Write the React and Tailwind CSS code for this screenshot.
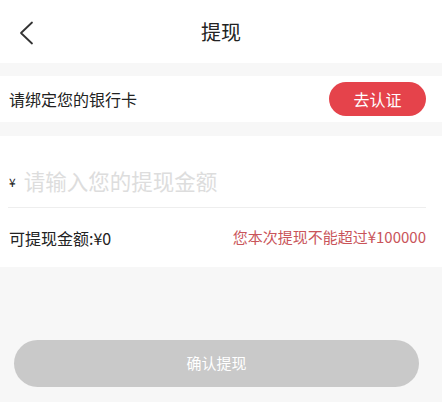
export default function App() {
  return (
    <div
      className="min-h-[402px] w-full bg-[#f7f7f7]"
      style={{ fontFamily: '"Noto Sans CJK SC", "Noto Sans", sans-serif' }}
    >
      {/* header */}
      <div className="relative flex h-[63px] items-center justify-center bg-white">
        <button type="button" className="absolute left-[18px] top-[21px] text-[#333]">
          <svg width="16" height="24" viewBox="0 0 16 24" fill="none">
            <polyline points="14,1.5 3,12 14,22.5" stroke="currentColor" strokeWidth="1.8" strokeLinecap="round" strokeLinejoin="round" />
          </svg>
        </button>
        <h1 className="text-[20px] text-[#222]">提现</h1>
      </div>

      {/* bank card */}
      <div className="mt-[13px] flex h-[46px] items-center justify-between bg-white pl-[9px] pr-[16px]">
        <span className="text-[16px] text-[#222]">请绑定您的银行卡</span>
        <button
          type="button"
          className="flex h-[34px] w-[97px] items-center justify-center rounded-full bg-[#e5434b] text-[16px] text-white"
        >
          去认证
        </button>
      </div>

      {/* amount */}
      <div className="mt-[14px] bg-white pl-[8px] pr-[16px]">
        <div className="flex h-[72px] items-center gap-[8px] border-b border-[#eeeeee] pt-[20px] pl-[1px]">
          <span className="text-[12px] text-[#222]">¥</span>
          <input
            className="flex-1 bg-transparent text-[21.5px] text-[#222] outline-none placeholder:text-[#dddddd]"
            placeholder="请输入您的提现金额"
          />
        </div>
        <div className="flex h-[59px] items-center justify-between pl-[1px]">
          <span className="text-[16px] text-[#222]">可提现金额:¥0</span>
          <span className="text-[15px] text-[#c9555a]">您本次提现不能超过¥100000</span>
        </div>
      </div>

      {/* submit */}
      <div className="px-[14px] pt-[73px]">
        <button
          type="button"
          className="flex h-[47px] w-[405px] items-center justify-center rounded-full bg-[#c9c9c9] text-[15px] text-white"
        >
          确认提现
        </button>
      </div>
    </div>
  );
}
